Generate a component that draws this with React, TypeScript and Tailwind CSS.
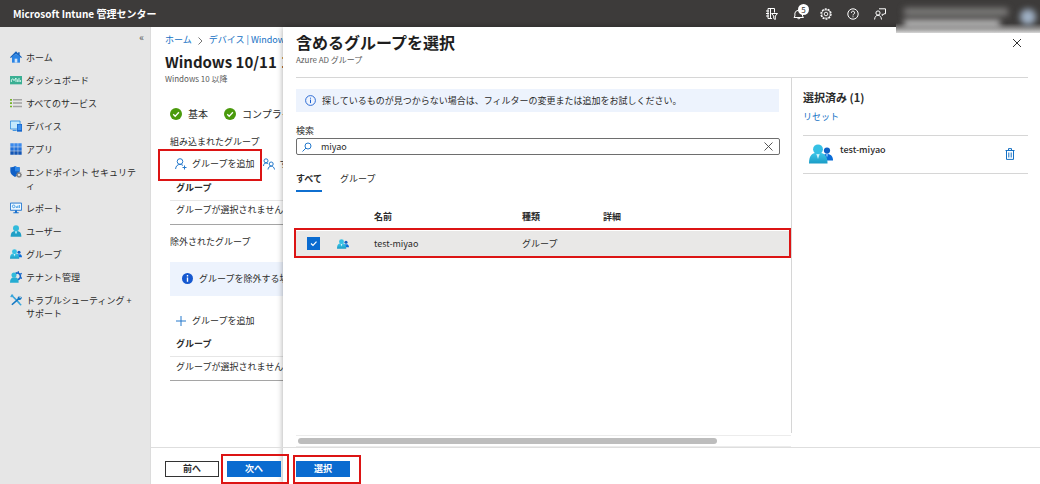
import type { ReactNode } from "react";

const RED = "pointer-events-none absolute border-2 border-[#dc1414]";

/* ── Icons ── */
function UsersIcon({ className }: { className: string }) {
  return (
    <svg viewBox="0 0 24 20" className={className} aria-hidden="true">
      <defs>
        <linearGradient id="u-light" x1="0" y1="0" x2="0" y2="1">
          <stop offset="0" stopColor="#3fc8ea" />
          <stop offset="1" stopColor="#1a9cc6" />
        </linearGradient>
      </defs>
      <circle cx="18" cy="6.6" r="3.1" fill="#0f5fc4" />
      <path d="M12 16.500c0-4.500 2-6.500 6-6.500s6 2.500 6 6.500z" fill="#0a6cd8" />
      <path d="M18 10l-1.300.2 1.300 3.300 1.300-3.300z" fill="#7dbcf8" />
      <path d="M0 19.500C0 12 2.500 8.500 9 8.500s9.500 3.500 9.500 11z" fill="url(#u-light)" />
      <path d="M7.200 9.600h3.600L9 15z" fill="#d4f4fc" />
      <circle cx="9" cy="5.300" r="4.900" fill="#35c0e4" />
    </svg>
  );
}

const icons: Record<string, ReactNode> = {
  home: (
    <>
      <path d="M3 8h12v9.500H3z" fill="#2b84e4" />
      <path d="M9 .5L0 9.200l1.300 1.300L9 4l7.700 6.500L18 9.200 14.500 6V2h-2.300v1.800z" fill="#1260bd" />
      <path d="M3 9l6-5 6 5v3H3z" fill="#2b84e4" />
      <path d="M7 11.500h4v6H7z" fill="#cfe4fa" />
    </>
  ),
  dashboard: (
    <>
      <path d="M0 3h18v12.500H0z" fill="#3aaf93" />
      <path d="M2 12V9l2-2 2 3 3-4v6M11.500 12V8M13.500 12V6M15.500 12V9" fill="none" stroke="#e8fff8" strokeWidth="1.300" />
    </>
  ),
  services: (
    <>
      <path d="M0 3h3v2.500H0zM0 8h3v2.500H0zM0 13h3v2.500H0z" fill="#76b32a" />
      <path d="M4.500 3H18v2.200H4.500zM4.500 8H18v2.200H4.500zM4.500 13H18v2.200H4.500z" fill="#a3a3a3" />
    </>
  ),
  devices: (
    <>
      <path d="M.6 1.500h14.500v12H.6z" fill="#c4e8fc" stroke="#2485dc" strokeWidth="1.200" />
      <path d="M4 15.500h6" stroke="#2485dc" strokeWidth="1.500" />
      <path d="M10.500 6H18v11.500h-7.500z" fill="#1666cc" />
      <path d="M11.500 7H17v8h-5.500z" fill="#3d8fec" />
    </>
  ),
  apps: (
    <>
      <path d="M.5.5h5.200v5.200H.5zM6.400.5h5.200v5.200H6.400zM12.300.5h5.200v5.200h-5.200z" fill="#3c8aec" />
      <path d="M.5 6.400h5.200v5.200H.5zM6.400 6.400h5.200v5.200H6.400zM12.300 6.400h5.200v5.200h-5.200z" fill="#2271da" />
      <path d="M.5 12.300h5.200v5.200H.5zM6.400 12.300h5.200v5.200H6.400zM12.300 12.300h5.200v5.200h-5.200z" fill="#1456b4" />
    </>
  ),
  shield: (
    <>
      <path d="M7.500 0c2 1.500 4.500 2 7 2v6c0 4-3 6.500-7 8.500C3.500 14.500.5 12 .5 8V2c2.500 0 5-.5 7-2z" fill="#0f5fc6" />
      <path d="M7.500 0c2 1.500 4.500 2 7 2v6h-7z" fill="#2b86e8" />
      <path d="M13.500 8.600v9.400M8.800 13.300h9.400M10.200 10l6.600 6.600M16.800 10l-6.600 6.600" stroke="#858585" strokeWidth="1.600" />
      <circle cx="13.500" cy="13.300" r="2.600" fill="#e6e6e6" stroke="#858585" strokeWidth="1.700" />
    </>
  ),
  report: (
    <>
      <path d="M.6 1.600h16.800v10.800H.6z" fill="#eef8ff" stroke="#1a72cf" strokeWidth="1.400" />
      <circle cx="5.500" cy="6.500" r="2" fill="none" stroke="#2a8de0" strokeWidth="1.200" />
      <path d="M9.500 9V6.500M11.700 9V5.500M14 9V4.500" stroke="#2a8de0" strokeWidth="1.300" />
      <path d="M7.500 12.500h3v3H13V17H5v-1.500h2.500z" fill="#1a72cf" />
    </>
  ),
  user: (
    <>
      <path d="M1 17.500C1 11.500 3.500 9 9 9s8 2.500 8 8.500z" fill="#209fc6" />
      <path d="M7 9.300h4L9 14z" fill="#c9f2fb" />
      <circle cx="9" cy="5" r="4.500" fill="#31bbdc" />
    </>
  ),
  tenant: (
    <>
      <path d="M8.500 3.500A5 5 0 1 1 11 13" fill="none" stroke="#1565c8" strokeWidth="2.400" />
      <path d="M12.500.5v3M17.500 3.500l-2 1.500M18 11l-2.500-1M9 2.500l1 2" stroke="#1565c8" strokeWidth="2" />
      <path d="M0 17.500c0-5 2-8 6.500-8S13 12.500 13 17.500z" fill="#25acd2" />
      <circle cx="6" cy="6" r="3.800" fill="#31bbdc" />
    </>
  ),
  tools: (
    <>
      <path d="M2.500 2l4 4M6 5.500l8 8M12 12l4 4" stroke="#3aa6dc" strokeWidth="2.400" strokeLinecap="round" />
      <path d="M16.700 3.300a4 4 0 0 0-5.500 4L2 15.200 3.600 17l9.200-8a4 4 0 0 0 4.700-5l-2.300 2-2-1.700z" fill="#1478c4" />
      <path d="M1 4.500L4.500 1" stroke="#3aa6dc" strokeWidth="2" />
    </>
  ),
};

function PersonAdd({ two = false }: { two?: boolean }) {
  return (
    <svg viewBox="0 0 12 12" className="size-3 shrink-0" fill="none" stroke="#2479cc" strokeWidth="1" aria-hidden="true">
      {two ? (
        <>
          <circle cx="3" cy="2.800" r="2" />
          <path d="M.5 8C.6 6 1.500 5 3 5c1 0 1.600.3 2 .9" />
          <circle cx="8.200" cy="6" r="2" />
          <path d="M5 11.500C5.200 9.300 6.500 8.200 8.200 8.200s3 1.200 3.300 3.300" />
        </>
      ) : (
        <>
          <circle cx="5" cy="3.500" r="2.800" />
          <path d="M.6 11C.8 8 2.600 6.400 5 6.400c1.200 0 2.200.4 3 1M9.500 7.500v4M7.500 9.500h4" />
        </>
      )}
    </svg>
  );
}

const menu = [
  { icon: "home", label: "ホーム" },
  { icon: "dashboard", label: "ダッシュボード" },
  { icon: "services", label: "すべてのサービス" },
  { icon: "devices", label: "デバイス" },
  { icon: "apps", label: "アプリ" },
  { icon: "shield", label: "エンドポイント セキュリティ" },
  { icon: "report", label: "レポート" },
  { icon: "user", label: "ユーザー" },
  { icon: "users", label: "グループ" },
  { icon: "tenant", label: "テナント管理" },
  { icon: "tools", label: "トラブルシューティング + サポート" },
];

function TopBar() {
  return (
    <header className="relative flex h-[27px] shrink-0 items-center justify-between bg-[#3d3b3a] pr-[154px] pl-[13px] text-white">
      <span className="text-[10px] leading-4 font-bold">Microsoft Intune 管理センター</span>
      <div className="flex items-center gap-[15px]">
        <button aria-label="フィルター" className="size-3">
          <svg viewBox="0 0 12 12" className="size-3" fill="none" stroke="#fff">
            <path d="M8.500 4.500v-4H2v10h4M0 3h3M0 5.500h3M0 8h3M4.500 .5v10" />
            <path d="M5.500 5.500h6L9.300 8v3.500L7.700 10.500V8z" fill="#3d3b3a" />
          </svg>
        </button>
        <button aria-label="通知" className="relative size-3">
          <svg viewBox="0 0 12 12" className="size-3" fill="none" stroke="#fff">
            <path d="M1 9.500h9.500L9.500 8V5a4 4 0 0 0-7.600 0v3zM4.500 9.500a1.300 1.300 0 0 0 2.600 0" />
          </svg>
          <span className="absolute -top-1 left-[5px] size-[11px] rounded-full bg-white text-[8px] leading-[11px] text-[#333]">5</span>
        </button>
        <button aria-label="設定" className="size-3">
          <svg viewBox="0 0 12 12" className="size-3" fill="none" stroke="#fff">
            <circle cx="6" cy="6" r="5" strokeWidth="1.300" strokeDasharray="2 1.100" />
            <circle cx="6" cy="6" r="4.100" strokeWidth=".7" />
            <circle cx="6" cy="6" r="1.800" strokeWidth=".9" />
          </svg>
        </button>
        <button aria-label="ヘルプ" className="size-3">
          <svg viewBox="0 0 12 12" className="size-3" fill="none" stroke="#fff">
            <circle cx="6" cy="6" r="5.200" />
            <path d="M4.400 4.800a1.600 1.600 0 1 1 2.400 1.300C6.200 6.500 6 6.700 6 7.400M6 8.300v1" />
          </svg>
        </button>
        <button aria-label="フィードバック" className="size-3">
          <svg viewBox="0 0 12 12" className="size-3" fill="none" stroke="#fff">
            <circle cx="4" cy="5" r="2.100" />
            <path d="M.6 11.500C.8 8.600 2.200 7.300 4 7.300s3.200 1.300 3.500 4.200M5 .8h6.500v5H10L8.200 7.500V5.800" />
          </svg>
        </button>
      </div>
      <div className="absolute top-0 right-0 z-30 h-[33px] w-36 overflow-hidden bg-linear-to-b from-[#3d3b3a] from-70% to-[#d8d8d8]">
        <div className="absolute top-2 left-2 h-2 w-[104px] bg-[#7d7c7b] blur-[3px]" />
        <div className="absolute top-5 left-2 h-[7px] w-24 bg-[#c4c4c4] blur-[3px]" />
        <div className="absolute top-[9px] right-1 size-4 rounded-full bg-[#9fb0c4] blur-[3px]" />
      </div>
    </header>
  );
}

function Sidebar() {
  return (
    <nav className="w-[151px] shrink-0 border-r border-[#dcdcdc] bg-[#e6e6e6]">
      <div className="flex h-[19px] items-center justify-end pr-[6px]">
        <button aria-label="折りたたむ" className="text-[10px] leading-[19px] text-[#555]">«</button>
      </div>
      {menu.map((m) => (
        <a key={m.label} href="#" className="flex gap-1 py-[5px] pr-3 pl-[10px] leading-[13px]">
          {m.icon === "users" ? (
            <UsersIcon className="mt-px h-[10px] w-3 shrink-0" />
          ) : (
            <svg viewBox="0 0 18 18" className="size-3 shrink-0" aria-hidden="true">{icons[m.icon]}</svg>
          )}
          <span className="break-all">{m.label}</span>
        </a>
      ))}
    </nav>
  );
}

function EmptyGroups() {
  return (
    <table className="w-full border-b border-[#a5a5a5] text-left">
      <thead>
        <tr className="border-b border-[#e6e6e6]">
          <th className="h-6 pl-[6px] font-bold">グループ</th>
        </tr>
      </thead>
      <tbody>
        <tr><td className="h-6 pb-1 pl-[6px]">グループが選択されませんで</td></tr>
      </tbody>
    </table>
  );
}

function Done() {
  return (
    <svg viewBox="0 0 12 12" className="size-3 shrink-0" aria-hidden="true">
      <circle cx="6" cy="6" r="6" fill="#4a9a0c" />
      <path d="M3.200 6.200l2 2 3.700-4" fill="none" stroke="#fff" strokeWidth="1.300" />
    </svg>
  );
}

function Profile() {
  return (
    <main className="w-[132px] flex-1 overflow-hidden pt-[6px] pl-[14px] whitespace-nowrap">
      <div className="flex gap-[6px] leading-[14px] text-[#1470c4]">
        <a href="#">ホーム</a>
        <svg viewBox="0 0 5 8" className="mt-[4px] h-2 w-[5px] shrink-0" fill="none" stroke="#777" aria-hidden="true"><path d="M.5.5L4 4 .5 7.500" /></svg>
        <a href="#">デバイス | Windows</a>
      </div>
      <h1 className="mt-[5px] text-[15px] leading-5 font-bold text-[#1e1e1e]">Windows 10/11 コ</h1>
      <p className="mt-px text-[8px] leading-[11px] text-[#5a5a5a]">Windows 10 以降</p>
      <div className="pl-[5px]">
        <div className="mt-[22px] flex h-4 items-center text-[10px]">
          <Done />
          <span className="mr-4 ml-[6px]">基本</span>
          <Done />
          <span className="ml-[6px]">コンプライ</span>
        </div>
        <h2 className="mt-3 leading-4">組み込まれたグループ</h2>
        <div className="mt-[6px] flex h-4 items-center gap-[9px] pl-[5px]">
          <button className="flex items-center gap-[5px]">
            <PersonAdd />
            グループを追加
          </button>
          <button className="flex items-center gap-1">
            <PersonAdd two />
            す
          </button>
        </div>
        <div className="mt-1"><EmptyGroups /></div>
        <h2 className="mt-[9px] leading-4">除外されたグループ</h2>
        <div className="mt-[12px] flex h-[34px] items-center gap-[6px] bg-[#edf3fd] pl-3">
          <svg viewBox="0 0 12 12" className="size-[11px] shrink-0" aria-hidden="true">
            <circle cx="6" cy="6" r="6" fill="#1558d0" />
            <path d="M6 5v4.500M6 2.300v1.500" stroke="#fff" strokeWidth="1.500" />
          </svg>
          グループを除外する場合
        </div>
        <button className="mt-[17px] flex h-4 items-center gap-[6px] pl-[6px]">
          <svg viewBox="0 0 10 10" className="size-[10px]" stroke="#2479cc" aria-hidden="true"><path d="M5 0v10M0 5h10" /></svg>
          グループを追加
        </button>
        <div className="mt-1"><EmptyGroups /></div>
      </div>
      <span className={`${RED} top-[122px] left-[7px] h-8 w-[104px]`} />
    </main>
  );
}

function GroupPicker() {
  return (
    <section className="absolute inset-y-0 right-0 left-[132px] flex flex-col bg-white pr-3 pb-[37px] pl-[13px] shadow-[0_0_6px_rgba(0,0,0,0.35)]">
      <header className="flex justify-between border-b border-[#d6d6d6] pt-[5px] pb-3">
        <div>
          <h2 className="text-[16px] leading-5 font-bold text-[#1e1e1e]">含めるグループを選択</h2>
          <p className="mt-[2px] text-[8px] leading-[11px] text-[#5a5a5a]">Azure AD グループ</p>
        </div>
        <button aria-label="閉じる" className="mt-[6px] mr-[6px] size-[10px]">
          <svg viewBox="0 0 10 10" className="size-[10px]" stroke="#333"><path d="M1 1l8 8M9 1L1 9" /></svg>
        </button>
      </header>
      <div className="flex flex-1">
        <div className="flex flex-1 flex-col">
          <div className="mt-[11px] mr-3 flex h-[23px] items-center gap-[6px] bg-[#edf3fd] pl-[9px]">
            <svg viewBox="0 0 11 11" className="size-[11px]" fill="none" stroke="#1b5fd0" aria-hidden="true">
              <circle cx="5.500" cy="5.500" r="4.900" strokeWidth=".9" />
              <path d="M5.500 4.600v3.500M5.500 2.700v1" />
            </svg>
            探しているものが見つからない場合は、フィルターの変更または追加をお試しください。
          </div>
          <label htmlFor="q" className="mt-3 leading-[14px]">検索</label>
          <div className="mr-[11px] flex h-[17px] items-center rounded-[2px] border border-[#6e6e6e] pr-[6px] pl-[5px]">
            <svg viewBox="0 0 10 10" className="size-[10px]" fill="none" stroke="#2479cc" aria-hidden="true"><circle cx="6" cy="4" r="3" /><path d="M4 6L.5 9.500" /></svg>
            <input id="q" defaultValue="miyao" className="min-w-0 flex-1 pl-[9px] leading-[14px] outline-none" />
            <button aria-label="クリア" className="size-[9px]">
              <svg viewBox="0 0 9 9" className="size-[9px]" stroke="#444" strokeWidth=".9"><path d="M.5.5l8 8M8.500.5l-8 8" /></svg>
            </button>
          </div>
          <div role="tablist" className="mt-[17px] flex gap-[18px]">
            <button role="tab" aria-selected="true" className="border-b-2 border-[#0f6fd0] pb-1 leading-[14px] font-bold">すべて</button>
            <button role="tab" aria-selected="false" className="pb-[6px] leading-[14px]">グループ</button>
          </div>
          <div className="relative mt-[11px]">
            <table className="w-full table-fixed text-left">
              <thead>
                <tr className="h-[28px] font-bold">
                  <th className="w-[41px]" />
                  <th className="w-[37px]" />
                  <th className="w-[148px]">名前</th>
                  <th className="w-[81px]">種類</th>
                  <th>詳細</th>
                </tr>
              </thead>
              <tbody>
                <tr className="h-[25px] bg-[#e9e8e7]">
                  <td className="pl-[11px]">
                    <span className="relative block size-[13px]">
                      <input type="checkbox" defaultChecked aria-label="test-miyao" className="block size-[13px] appearance-none bg-[#0a6bd0]" />
                      <svg viewBox="0 0 13 13" className="pointer-events-none absolute inset-0 size-[13px]" fill="none" stroke="#fff" strokeWidth="1.200"><path d="M4 6.500l2 2 3.500-3.800" /></svg>
                    </span>
                  </td>
                  <td><UsersIcon className="h-[10px] w-3" /></td>
                  <td>test-miyao</td>
                  <td>グループ</td>
                  <td />
                </tr>
              </tbody>
            </table>
            <span className={`${RED} right-0 -bottom-[2px] -left-[2px] h-[30px]`} />
          </div>
          <div className="mt-auto flex h-3 items-center border-y border-[#ececec] pl-[2px]">
            <div className="h-[6px] w-[85%] rounded-full bg-[#bdbdbd]" />
          </div>
        </div>
        <aside className="mb-[14px] w-[237px] border-l border-[#d6d6d6] pt-[11px] pl-[11px]">
          <h3 className="text-[11px] leading-4 font-bold">選択済み (1)</h3>
          <a href="#" className="mt-1 block leading-4 text-[#1470c4]">リセット</a>
          <div className="mt-[10px] flex h-[39px] border-y border-[#d6d6d6] pr-[13px] pl-[6px]">
            <UsersIcon className="mt-2 h-5 w-6" />
            <span className="mt-[6px] ml-[7px] flex-1 leading-4 font-medium">test-miyao</span>
            <button aria-label="削除" className="mt-3 h-3 w-[10px]">
              <svg viewBox="0 0 10 12" className="h-3 w-[10px]" fill="none" stroke="#1470c4"><path d="M.5 2.500h9M3.500 2V.6h3V2M1.500 2.500v8.900h7V2.500M3.800 4.500v5M6.200 4.500v5" /></svg>
            </button>
          </div>
        </aside>
      </div>
    </section>
  );
}

export default function App() {
  return (
    <div lang="ja" className="flex min-h-screen flex-col bg-white font-['Noto_Sans_CJK_JP',sans-serif] text-[9px] leading-[14px] text-[#2b2b2b]">
      <TopBar />
      <div className="flex flex-1">
        <Sidebar />
        <div className="relative flex min-w-0 flex-1 flex-col">
          <Profile />
          <GroupPicker />
          <footer className="relative z-10 flex h-[37px] shrink-0 border-t border-[#dedede] pt-[13px] pl-[14px] font-bold">
            <button className="flex h-4 w-[54px] items-center justify-center border border-[#333]">前へ</button>
            <button className="relative ml-2 h-4 w-[54px] bg-[#0a6bd0] text-white">
              次へ
              <span className={`${RED} -top-[7px] -right-2 -bottom-[7px] -left-[6px]`} />
            </button>
            <button className="relative ml-[15px] h-4 w-[54px] bg-[#0a6bd0] text-white">
              選択
              <span className={`${RED} -top-[6px] -right-[11px] -bottom-[7px] -left-[3px]`} />
            </button>
          </footer>
        </div>
      </div>
    </div>
  );
}
